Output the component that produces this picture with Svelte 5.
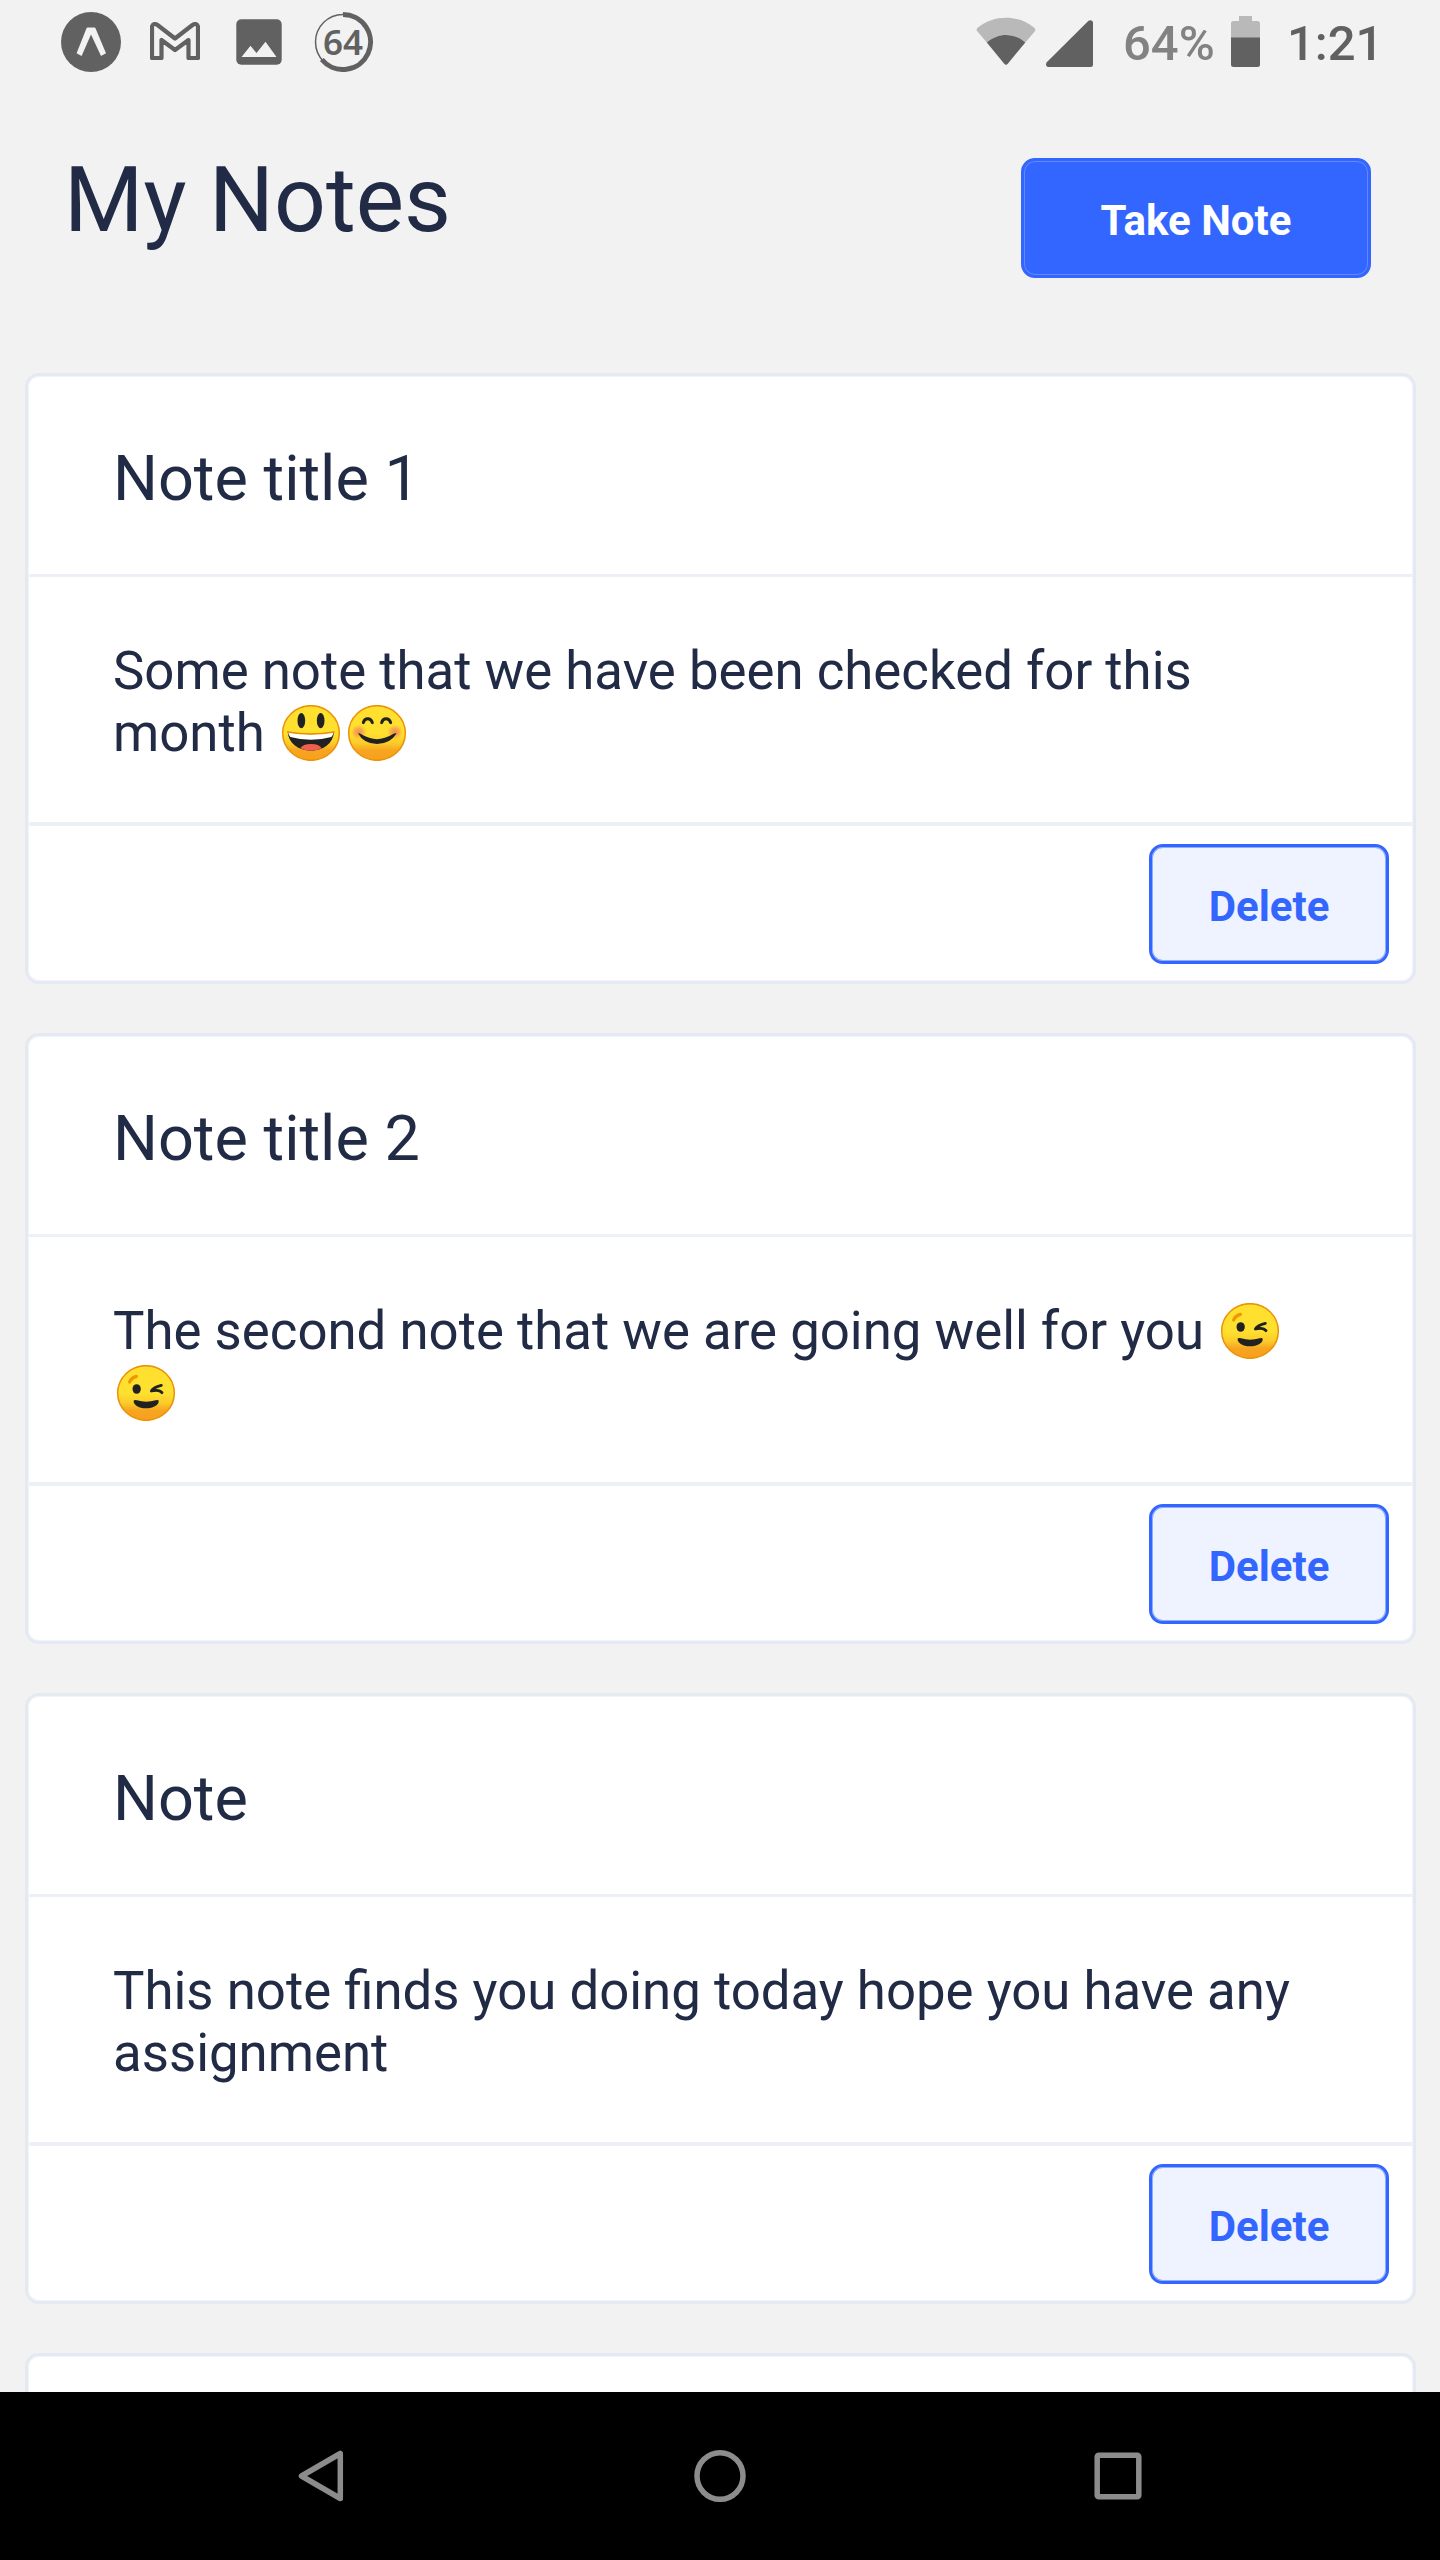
<script>
  const notes = [
    { title: 'Note title 1', text: 'Some note that we have been checked for this month ', faces: ['grin', 'smile'] },
    { title: 'Note title 2', text: 'The second note that we are going well for you ', faces: ['wink', 'wink'] },
    { title: 'Note', text: 'This note finds you doing today hope you have any assignment', faces: [] }
  ];
</script>

{#snippet face(kind)}
  <svg class="emoji" viewBox="0 0 198 168" role="img" aria-label={kind}>
    <defs>
      <linearGradient id="skin" x1="0" y1="0" x2="0" y2="1">
        <stop offset="0.5" stop-color="#ffe02f" />
        <stop offset="0.68" stop-color="#fccc2a" />
        <stop offset="0.82" stop-color="#f7a520" />
        <stop offset="1" stop-color="#f6a01e" />
      </linearGradient>
      <radialGradient id="blush">
        <stop offset="0" stop-color="#f07f5a" stop-opacity="0.85" />
        <stop offset="0.5" stop-color="#f28a55" stop-opacity="0.6" />
        <stop offset="1" stop-color="#f9b040" stop-opacity="0" />
      </radialGradient>
    </defs>
    <ellipse cx="99" cy="84" rx="85" ry="82" fill="url(#skin)" stroke="#eb9208" stroke-width="4.5" />
    {#if kind === 'grin'}
      <ellipse cx="70" cy="47" rx="11.5" ry="23" fill="#212121" />
      <ellipse cx="128" cy="47" rx="11.5" ry="23" fill="#212121" />
      <path d="M29 81Q99 93 168 81C165 115 137 137 99 137S32 115 29 81Z" fill="#212121" />
      <path d="M30 82Q99 94 167 82Q165 91 160 96Q99 113 37 96Q32 91 30 82Z" fill="#fff" />
      <path d="M67 130Q74 117 99 117T131 130Q118 137 99 137T67 130Z" fill="#ee5f50" />
      <path d="M29 81Q99 93 168 81" fill="none" stroke="#eb8f00" stroke-width="5" stroke-linecap="round" />
    {:else if kind === 'smile'}
      <ellipse cx="44" cy="81" rx="25" ry="23" fill="url(#blush)" />
      <ellipse cx="153" cy="81" rx="25" ry="23" fill="url(#blush)" />
      <path d="M58 53C62 38 80 37 85 53M113 53C117 38 135 37 140 53" fill="none" stroke="#212121" stroke-width="9" stroke-linecap="round" />
      <path d="M42 85Q46 83 52 88Q99 117 146 88Q153 83 158 85Q139 117 99 117T42 85Z" fill="#212121" />
    {:else}
      <path d="M50 51Q55 38 70 34" fill="none" stroke="#ee9700" stroke-width="10" stroke-linecap="round" />
      <ellipse cx="71" cy="72" rx="12.5" ry="14.5" fill="#212121" />
      <path d="M145 61Q120 67 115 78Q139 72 147 83" fill="none" stroke="#212121" stroke-width="8.5" stroke-linecap="round" stroke-linejoin="round" />
      <path d="M62 107Q64 103 72 106Q99 114 128 106Q136 103 137 107C139 119 121 130 99 130S60 118 62 107Z" fill="#212121" />
    {/if}
  </svg>
{/snippet}

<div class="screen">
  <div class="status">
    <svg class="expo" viewBox="61 12 60 60">
      <circle cx="91" cy="42" r="30" fill="#616161" />
      <path d="M87.6 27.4h6.8q.7 0 1 .7l10.6 25.2-5 2.6L91 34.4 81.600 55.900l-5-2.600L86.600 28.100q.3-.7 1-.7Z" fill="#f2f2f2" />
    </svg>
    <svg class="gmail" viewBox="150 22 50 38">
      <path d="M152 58V26.500Q153.500 22.300 157.500 25L175 38.500 192.500 25Q196.500 22.300 198 26.500V58H188.500V40L175 50 161.500 40V58Z" fill="none" stroke="#616161" stroke-width="4.200" stroke-linejoin="round" />
    </svg>
    <svg class="photo" viewBox="236 19 46 46">
      <rect x="236.300" y="19.300" width="45.400" height="45.400" rx="5" fill="#616161" />
      <path d="M241.500 57L250.500 45.700 256.500 53 265.500 41.800 276.500 57Z" fill="#f2f2f2" />
    </svg>
    <div class="ring">
      <svg viewBox="313 12 60 60">
        <circle cx="343" cy="42" r="27.500" fill="none" stroke="#616161" stroke-width="1.500" />
        <path d="M343 14.500A27.500 27.500 0 1 1 321.800 59.500" fill="none" stroke="#616161" stroke-width="5" />
      </svg>
      <span>64</span>
    </div>
    <div class="spacer"></div>
    <svg class="wifi" viewBox="976 17 60 48">
      <path d="M977.500 31.500Q975.500 29.500 978 27.500C994 14.500 1018 14.500 1034 27.500Q1036.500 29.500 1034.700 31.500L1025.300 42.500C1014 32.500 998 32.500 986.800 42.500Z" fill="#b9b9b9" />
      <path d="M986.800 42.500C998 32.500 1014 32.500 1025.300 42.500L1008 63.500Q1006 66 1004 63.500Z" fill="#616161" />
    </svg>
    <svg class="signal" viewBox="1046 20 47 47">
      <path d="M1048 67Q1046 66.500 1046 64.500L1046.500 62.500 1088.500 20.800Q1091.500 19 1093 22V64.500Q1093 67 1090.500 67Z" fill="#616161" />
    </svg>
    <span class="percent">64%</span>
    <svg class="battery" viewBox="1231 16 29 51">
      <path d="M1231 38V23.500Q1231 21 1233.500 21H1239V16H1252V21H1257.500Q1260 21 1260 23.500V38Z" fill="#b9b9b9" />
      <path d="M1231 37.500H1260V64.500Q1260 67 1257.500 67H1233.500Q1231 67 1231 64.500Z" fill="#616161" />
    </svg>
    <span class="clock">1:21</span>
  </div>

  <header>
    <h1>My Notes</h1>
    <button class="take">Take Note</button>
  </header>

  <main>
    {#each notes as note}
      <article>
        <h2>{note.title}</h2>
        <p>{note.text}{#each note.faces as kind}{@render face(kind)}{/each}</p>
        <footer><button class="delete">Delete</button></footer>
      </article>
    {/each}
    <article></article>
  </main>

  <nav>
    <svg viewBox="0 0 60 60"><path d="M48.300 7.500V52.500L9.500 30Z" /></svg>
    <svg viewBox="0 0 60 60"><ellipse cx="30" cy="30" rx="23" ry="23.300" /></svg>
    <svg viewBox="0 0 60 60"><rect x="9.200" y="9.200" width="41.600" height="41.600" rx="1.500" /></svg>
  </nav>
</div>

<style>
  :global(body) {
    margin: 0;
    background: #f2f2f2;
  }
  .screen {
    width: 1440px;
    height: 2560px;
    display: flex;
    flex-direction: column;
    overflow: hidden;
    font-family: Roboto, sans-serif;
    color: #222b45;
    background: #f2f2f2;
  }
  svg {
    display: block;
    flex: none;
  }
  .status {
    height: 84px;
    flex: none;
    box-sizing: border-box;
    padding: 0 60px 0 61px;
    display: flex;
    align-items: flex-start;
    color: #616161;
    font-size: 49px;
    font-weight: 500;
    line-height: 58px;
  }
  .expo { width: 60px; height: 60px; margin-top: 12px; }
  .gmail { width: 50px; height: 38px; margin: 22px 0 0 29px; }
  .photo { width: 46px; height: 46px; margin: 19px 0 0 36px; }
  .ring {
    width: 60px;
    height: 60px;
    margin: 12px 0 0 31px;
    display: grid;
    place-items: center;
    font: 600 35px/60px 'Noto Sans', sans-serif;
  }
  .ring > * { grid-area: 1 / 1; }
  .ring svg { width: 60px; height: 60px; }
  .spacer { flex: 1; }
  .wifi { width: 60px; height: 48px; margin-top: 17px; }
  .signal { width: 47px; height: 47px; margin: 20px 0 0 10px; }
  .percent { width: 91px; margin: 15px 0 0 30px; color: #828282; white-space: nowrap; }
  .battery { width: 29px; height: 51px; margin: 16px 0 0 17px; }
  .clock { width: 93px; margin: 15px 0 0 27px; white-space: nowrap; }

  header {
    height: 289px;
    flex: none;
    box-sizing: border-box;
    padding: 63px 69px 0 64px;
    display: flex;
    justify-content: space-between;
    align-items: flex-start;
  }
  h1 {
    margin: 0;
    font-size: 91px;
    line-height: 107px;
    font-weight: 400;
  }
  button {
    box-sizing: border-box;
    height: 120px;
    padding: 5px 0 0;
    border-radius: 14px;
    border: 3px solid #36f;
    font: 700 42px/50px Roboto, sans-serif;
  }
  .take {
    width: 350px;
    margin-top: 11px;
    color: #fff;
    background: #36f;
    box-shadow: inset 0 0 0 1px #6288ff;
  }
  .delete {
    width: 240px;
    color: #36f;
    background: #eff3ff;
    box-shadow: inset 0 0 0 1px #91acff;
  }
  main {
    flex: 1;
    min-height: 0;
    overflow: hidden;
    padding: 0 24px 0 25px;
    display: flex;
    flex-direction: column;
    gap: 49px;
  }
  article {
    height: 611px;
    flex: none;
    box-sizing: border-box;
    border: 3px solid #e4e9f2;
    border-radius: 14px;
    background: #fff;
    box-shadow: inset 0 0 0 1px #f1f4f8;
    display: flex;
    flex-direction: column;
  }
  h2 {
    margin: 0 1px;
    height: 198px;
    padding-left: 84px;
    border-bottom: 3px solid #edf1f7;
    font-size: 63px;
    line-height: 206px;
    font-weight: 400;
  }
  p {
    margin: 0 1px;
    height: 182px;
    padding: 63px 84px 0;
    border-bottom: 4px solid #edf1f7;
    font-size: 52.75px;
    line-height: 62px;
  }
  .emoji {
    display: inline-block;
    width: 66px;
    height: 56px;
    vertical-align: -10px;
  }
  footer {
    padding: 18px 24px 0 0;
    display: flex;
    justify-content: flex-end;
  }
  nav {
    height: 168px;
    flex: none;
    box-sizing: border-box;
    padding: 0 292px;
    background: #000;
    display: flex;
    justify-content: space-between;
    align-items: center;
  }
  nav svg {
    width: 60px;
    height: 60px;
    fill: none;
    stroke: #8c8c8c;
    stroke-width: 5.5;
    stroke-linejoin: round;
  }
</style>
